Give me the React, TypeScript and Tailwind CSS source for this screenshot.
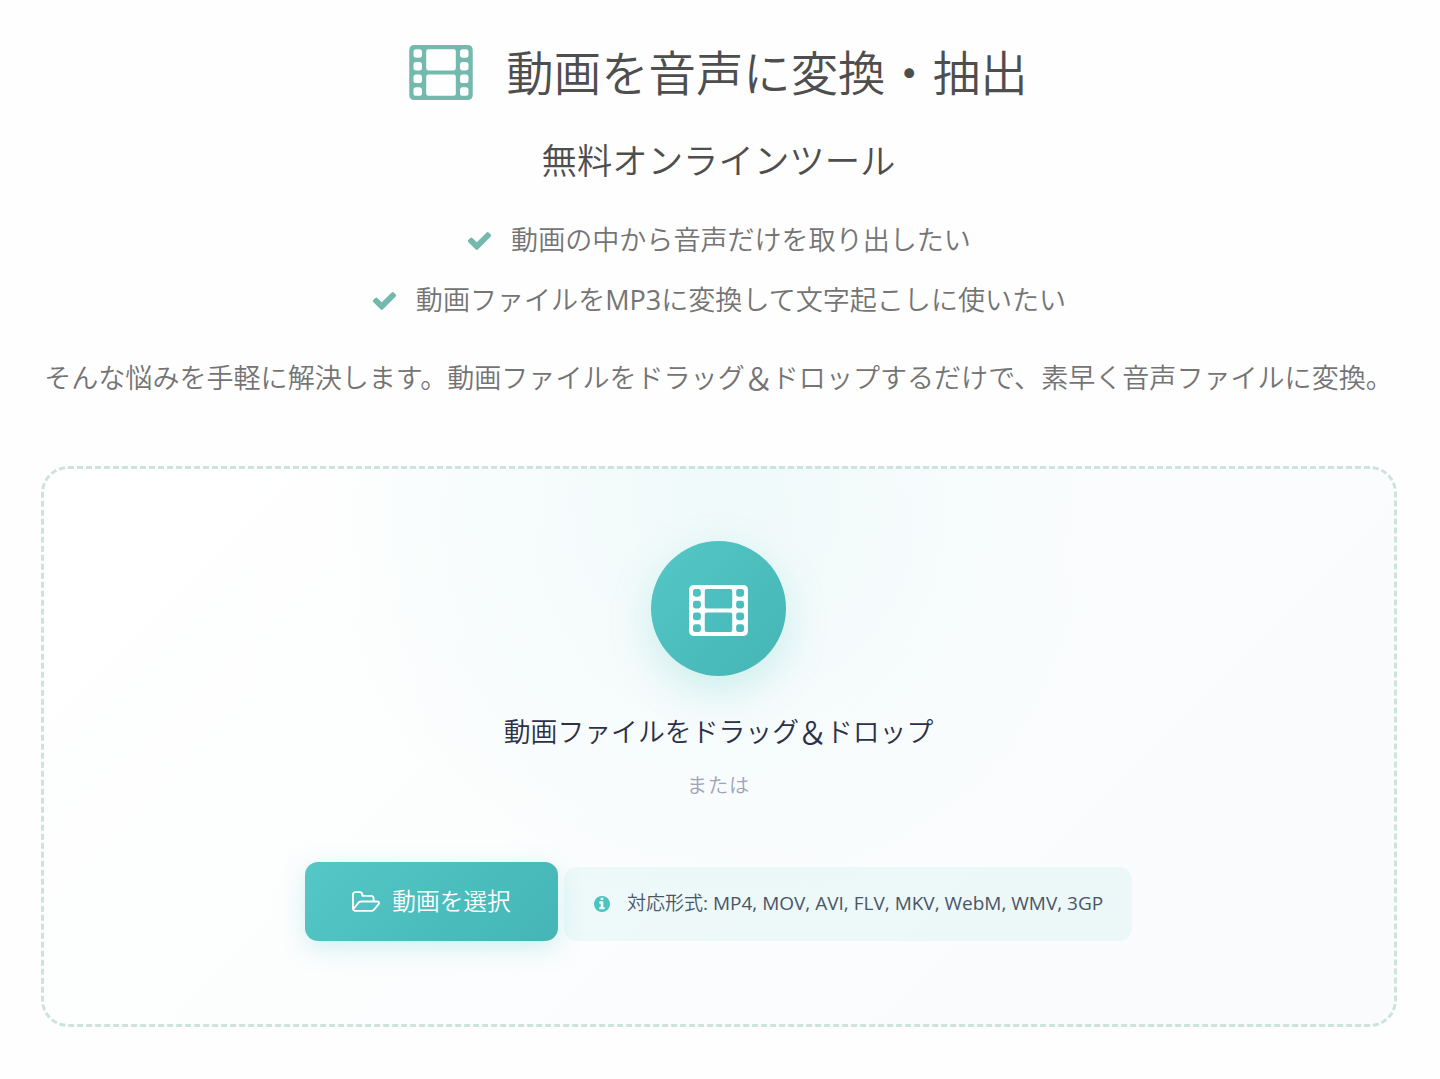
import React from 'react';

interface IconProps {
  className?: string;
}

const SPROCKET_ROWS = [128, 512, 896, 1280];

const FilmIcon: React.FC<IconProps> = ({ className }) => (
  <svg viewBox="0 0 1920 1664" fill="currentColor" className={className} aria-hidden="true">
    <path
      fillRule="evenodd"
      d={
        'M160 0H1760Q1920 0 1920 160V1504Q1920 1664 1760 1664H160Q0 1664 0 1504V160Q0 0 160 0Z' +
        'M576 128H1344Q1408 128 1408 192V704Q1408 768 1344 768H576Q512 768 512 704V192Q512 128 576 128Z' +
        'M576 896H1344Q1408 896 1408 960V1472Q1408 1536 1344 1536H576Q512 1536 512 1472V960Q512 896 576 896Z' +
        SPROCKET_ROWS.map((y) =>
          [128, 1536]
            .map((x) => `M${x + 80} ${y}h96q80 0 80 80v96q0 80 -80 80h-96q-80 0 -80 -80v-96q0 -80 80 -80z`)
            .join('')
        ).join('')
      }
    />
  </svg>
);

const CheckIcon: React.FC<IconProps> = ({ className }) => (
  <svg viewBox="0 0 1792 1792" fill="currentColor" className={className} aria-hidden="true">
    <path d="M1671 566q0 40-28 68l-724 724-136 136q-28 28-68 28t-68-28l-136-136-362-362q-28-28-28-68t28-68l136-136q28-28 68-28t68 28l294 295 656-657q28-28 68-28t68 28l136 136q28 28 28 68z" />
  </svg>
);

const FolderIcon: React.FC<IconProps> = ({ className }) => (
  <svg viewBox="64 128 1909 1408" fill="currentColor" className={className} aria-hidden="true">
    <path d="M1845 931q0-35-53-35h-1088q-40 0-85.500 21.500t-71.500 52.500l-294 363q-18 24-18 40 0 35 53 35h1088q40 0 86-22t71-53l294-363q18-22 18-39zm-1141-163h768v-160q0-40-28-68t-68-28h-576q-40 0-68-28t-28-68v-64q0-40-28-68t-68-28h-320q-40 0-68 28t-28 68v853l256-315q44-53 116-87.500t140-34.500zm1269 163q0 62-46 120l-295 363q-43 53-116 87.500t-140 34.500h-1088q-92 0-158-66t-66-158v-960q0-92 66-158t158-66h320q92 0 158 66t66 158v32h544q92 0 158 66t66 158v160h192q54 0 99 24.500t67 70.500q15 32 15 68z" />
  </svg>
);

const InfoIcon: React.FC<IconProps> = ({ className }) => (
  <svg viewBox="128 128 1536 1536" fill="currentColor" className={className} aria-hidden="true">
    <path d="M1152 1376v-160q0-14-9-23t-23-9h-96v-512q0-14-9-23t-23-9h-320q-14 0-23 9t-9 23v160q0 14 9 23t23 9h96v320h-96q-14 0-23 9t-9 23v160q0 14 9 23t23 9h448q14 0 23-9t9-23zm-128-896v-160q0-14-9-23t-23-9h-192q-14 0-23 9t-9 23v160q0 14 9 23t23 9h192q14 0 23-9t9-23zm640 416q0 209-103 385.500t-279.500 279.500-385.500 103-385.500-103-279.500-279.500-103-385.500 103-385.500 279.500-279.500 385.500-103 385.500 103 279.500 279.500 103 385.500z" />
  </svg>
);

// the full-width ampersand is drawn small by the CJK font
const Ampersand = () => <span className="inline-block scale-115">＆</span>;

const worries = [
  <>動画の中から音声だけを取り出したい</>,
  <>
    動画ファイルを<span className="font-normal">MP3</span>に変換して文字起こしに使いたい
  </>,
];

const App: React.FC = () => {
  return (
    <main className="flex h-[1079px] w-[1440px] flex-col items-center overflow-hidden bg-[#fefefe] pt-[37px] pr-[3px] font-['Open_Sans','Noto_Sans_CJK_JP',sans-serif] font-[350] whitespace-nowrap">
      <h1 className="flex h-[72px] items-center text-[47.4px] leading-[72px] font-[350] text-[#4e4e4e]">
        <FilmIcon className="mr-[33px] mb-[2px] h-[55px] w-[64px] text-[#73b9ad]" />
        動画を音声に変換・抽出
      </h1>
      <h2 className="mt-[23px] h-[56px] text-[35.4px] leading-[56px] font-[350] text-[#4e4e4e]">無料オンラインツール</h2>

      <ul className="mt-[22px] flex flex-col items-center text-[27.050px] text-[#747474]">
        {worries.map((worry, i) => (
          <li key={i} className="flex h-[60px] items-center">
            <CheckIcon className="mr-[18px] size-[27px] text-[#73b9ad]" />
            <span>{worry}</span>
          </li>
        ))}
      </ul>

      <p className="mt-[26px] h-[44px] text-[27.050px] leading-[44px] text-[#747474]">
        そんな悩みを手軽に解決します。動画ファイルをドラッグ
        <Ampersand />
        ドロップするだけで、素早く音声ファイルに変換。
      </p>

      <section className="mt-[66px] flex h-[561px] w-[1356px] flex-col items-center rounded-[27px] border-3 border-dashed border-[#cde3dd] bg-[radial-gradient(ellipse_400px_420px_at_50%_5%,rgba(78,205,196,0.08),rgba(78,205,196,0)),linear-gradient(135deg,#ffffff,#f9fbfc)] bg-origin-border pt-[72px]">
        <div className="flex size-[135px] shrink-0 items-center justify-center rounded-full bg-linear-135 from-[#54c7c6] to-[#45b5b6] shadow-[0_14px_41px_rgba(78,205,196,0.25)]">
          <FilmIcon className="mt-[4px] h-[51px] w-[59px] text-white" />
        </div>
        <p className="mt-[34px] h-[44px] text-[26.850px] leading-[44px] text-[#2d3047]">
          動画ファイルをドラッグ
          <Ampersand />
          ドロップ
        </p>
        <p className="mt-[13px] h-[36px] text-[20.300px] leading-[36px] tracking-[0.850px] text-[#a0a3b8]">または</p>

        <div className="mt-[59px] flex items-end gap-[6px]">
          <button className="flex h-[79px] w-[253px] items-center justify-center rounded-[13px] bg-linear-135 from-[#54c7c6] to-[#45b5b6] text-[23.700px] font-[350] text-white shadow-[0_7px_25px_rgba(78,205,196,0.25)]">
            <FolderIcon className="mr-[12px] h-[21px] w-[28px]" />
            動画を選択
          </button>
          <div className="flex h-[74px] w-[568px] items-center rounded-[13px] bg-[rgba(78,205,196,0.08)] pb-px pl-[30px] text-[19px] text-[#4a5568]">
            <InfoIcon className="mr-[17px] size-[16px] text-[#4fc3c1]" />
            <span>
              対応形式<span className="font-normal">: MP4, MOV, AVI, FLV, MKV, WebM, WMV, 3GP</span>
            </span>
          </div>
        </div>
      </section>
    </main>
  );
};

export default App;
